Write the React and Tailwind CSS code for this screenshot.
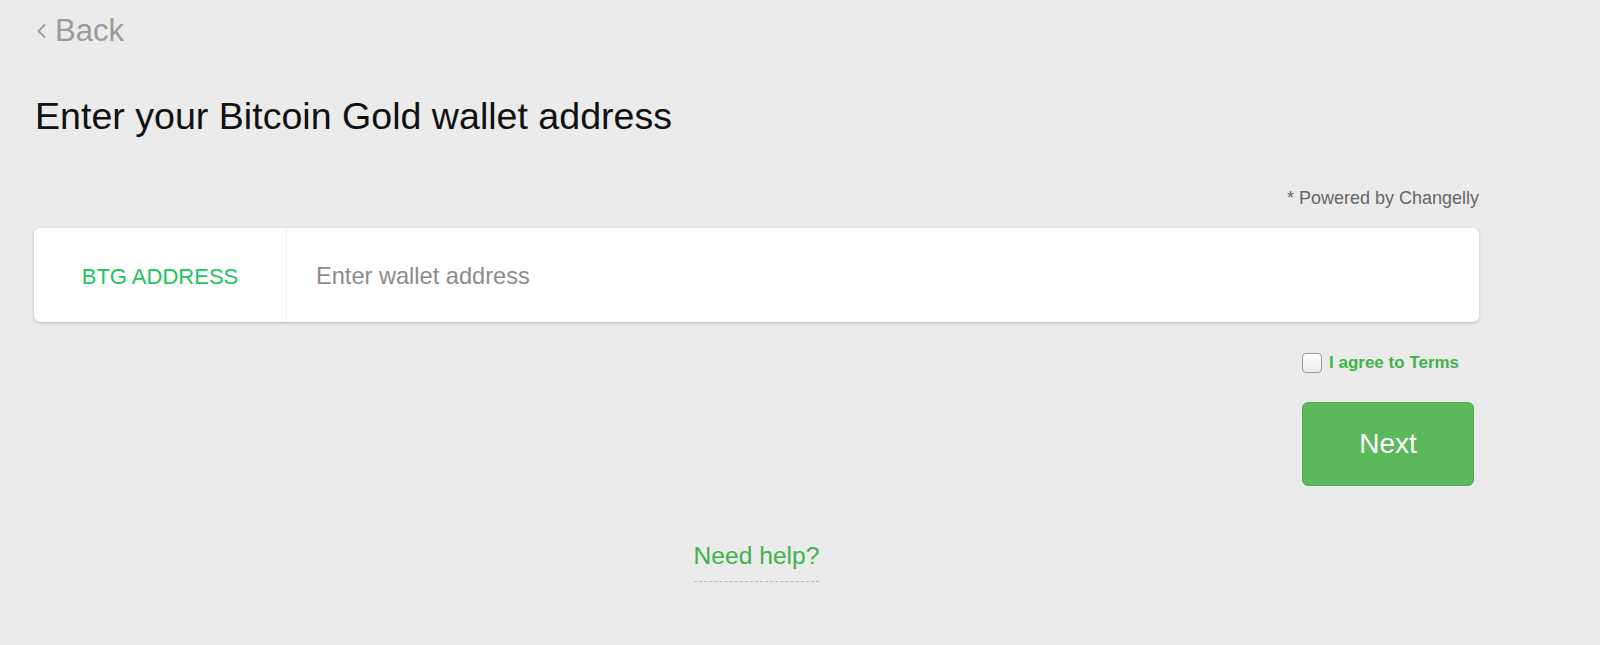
import { useState } from 'react'

/**
 * Wallet address step – Bitcoin Gold (BTG)
 */
export default function App() {
  const [address, setAddress] = useState('')
  const [agreed, setAgreed] = useState(false)

  return (
    <div
      className="min-h-[645px] w-full bg-[#ebebeb] text-[#111]"
      style={{ fontFamily: '"Liberation Sans", Arial, sans-serif' }}
    >
      <div className="pl-[34px] w-[1479px] flex flex-col">
        {/* Back link */}
        <a href="#" className="mt-[12px] flex items-center h-[36px] text-[31px] text-[#9b9b9b] leading-none self-start">
          <svg width="11" height="16" viewBox="0 0 11 16" className="ml-[2px] mr-[8px] mt-[2px]">
            <polyline points="9,1.5 2.5,8 9,14.5" fill="none" stroke="#9b9b9b" strokeWidth="1.8" />
          </svg>
          Back
        </a>

        {/* Title */}
        <h1 className="mt-[46px] ml-[1px] text-[37.6px] leading-[44px] font-normal">
          Enter your Bitcoin Gold wallet address
        </h1>

        {/* Powered by */}
        <p className="mt-[48px] text-right text-[18px] leading-[24px] text-[#666]">* Powered by Changelly</p>

        {/* Address card */}
        <div className="mt-[18px] flex h-[94px] bg-white rounded-[6px] shadow-[0_1px_3px_rgba(0,0,0,0.22)]">
          <div className="w-[253px] flex items-center justify-center pt-[3px] border-r border-[#f1f1f1] text-[22px] text-[#21c45d]">
            BTG ADDRESS
          </div>
          <input
            value={address}
            onChange={(e) => setAddress(e.target.value)}
            placeholder="Enter wallet address"
            className="flex-1 pl-[29px] pr-6 pt-[3px] text-[23.6px] text-[#333] placeholder:text-[#8c8c8c] bg-transparent outline-none rounded-r-[6px]"
          />
        </div>

        {/* Terms + Next */}
        <div className="self-end mr-[5px] w-[172px] flex flex-col items-center">
          <label className="mt-[29px] flex items-center h-[24px] gap-[7px] cursor-pointer self-start">
            <span
              onClick={() => setAgreed(!agreed)}
              className="w-[20px] h-[20px] rounded-[4px] border border-[#9a9a9a] bg-gradient-to-b from-white to-[#ececec] flex items-center justify-center text-[13px] text-[#333]"
            >
              {agreed ? '✓' : ''}
            </span>
            <span className="text-[17px] font-bold text-[#3db34a]">I agree to Terms</span>
          </label>
          <button className="mt-[27px] w-[172px] h-[84px] rounded-[6px] bg-[#5cb85c] border border-[#4cae4c] text-white text-[28px]">
            Next
          </button>
        </div>

        {/* Help */}
        <div className="mt-[55px] flex justify-center">
          <a href="#" className="text-[24.6px] leading-[30px] text-[#3db34a] pb-[10px] border-b border-dashed border-[#b5b5b5]">
            Need help?
          </a>
        </div>
      </div>
    </div>
  )
}
